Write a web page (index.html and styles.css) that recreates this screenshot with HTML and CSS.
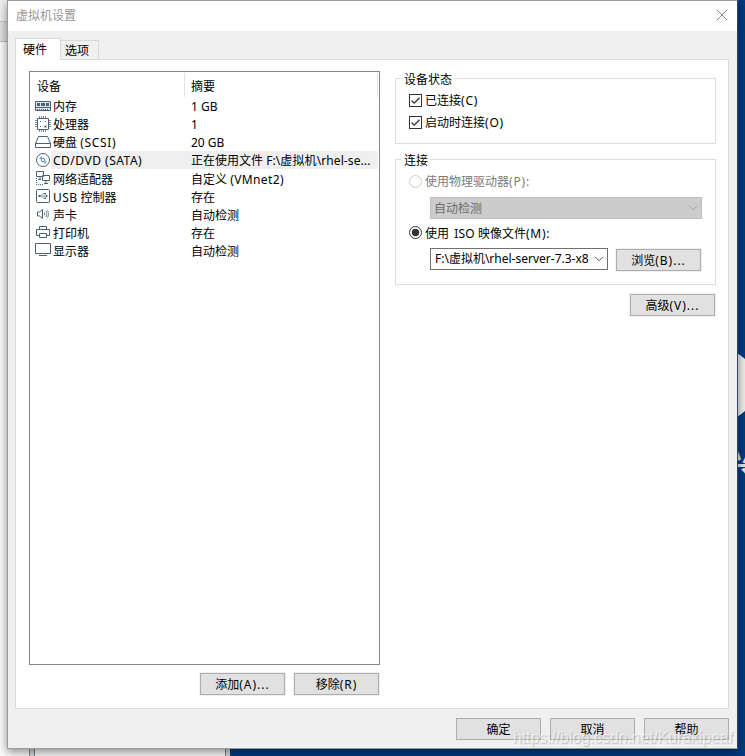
FILE: index.html
```html
<!DOCTYPE html>
<html lang="zh-CN">
<head>
<meta charset="utf-8">
<title>虚拟机设置</title>
<link rel="stylesheet" href="styles.css">
</head>
<body>
<div class="desktop">
  <div class="back-left"></div>
  <div class="back-window"></div>
  <div class="disc"></div>
  <div class="caption">兴</div>
</div>
<main class="dialog">
  <header class="titlebar">
    <h1>虚拟机设置</h1>
    <svg class="close" viewBox="0 0 12 12" width="12" height="12"><path d="M.8.8l10.4 10.4M11.2.8L.8 11.2"/></svg>
  </header>
  <nav class="tabs"><span class="tab active">硬件</span><span class="tab">选项</span></nav>
  <section class="panel">
    <div class="left">
      <div class="list">
        <div class="head"><span class="c1">设备</span><span class="c2">摘要</span></div>
        <div class="row"><svg class="ico" viewBox="0 0 16 16"><path class="light" d="M.5 3.500h15v9H.5z"/><path class="fill" d="M2 5h3v3H2zM6 5h4v3H6zM11 5h3v3h-3z"/><path d="M.5 9.500h15"/><path class="dots" d="M2 11.500h12"/></svg><span class="name">内存</span><span class="val">1 GB</span></div>
        <div class="row"><svg class="ico" viewBox="0 0 16 16"><path class="soft" d="M4.500 0v2M6.500 0v2M8.500 0v2M10.500 0v2M4.500 14v2M6.500 14v2M8.500 14v2M10.500 14v2M0 4.500h2.500M0 6.500h2.500M0 8.500h2.500M0 10.500h2.500M13.500 4.500H16M13.500 6.500H16M13.500 8.500H16M13.500 10.500H16"/><path d="M2.500 2.500h11v11h-11z"/><path class="fill" d="M5 5h1v1H5zM10 5h1v1h-1zM5 10h1v1H5zM9.500 9.500h2v2h-2z"/></svg><span class="name">处理器</span><span class="val">1</span></div>
        <div class="row"><svg class="ico" viewBox="0 0 16 16"><path d="M3.500 2.500h9l3 7H.5zM.5 9.500h15v4H.5z"/></svg><span class="name">硬盘 <i class="l w6">(SCSI)</i></span><span class="val">20 GB</span></div>
        <div class="row selected"><svg class="ico" viewBox="0 0 16 16"><circle cx="8" cy="8" r="6.500"/><circle class="blue" cx="8" cy="8" r="1.800"/><path class="pale" d="M4 6.500L6.500 4l.7 1.800-1.400 1.400zM9 10.200l1.300-1.300 1.700.8L9.700 12z"/></svg><span class="name"><i class="l w5">CD/DVD (SATA)</i></span><span class="val">正在使用文件 <i class="l w1">F:\虚拟机\rhel-se...</i></span></div>
        <div class="row"><svg class="ico" viewBox="0 0 16 16"><path d="M1.500 1.500h7v5h-7zM5 7v2M3 9.500h3M7.500 5.500h7v5h-7zM11 11v2M9 13.500h4"/><path class="dots" d="M1.500 8v6.500h7"/></svg><span class="name">网络适配器</span><span class="val">自定义 <i class="l w4">(VMnet2)</i></span></div>
        <div class="row"><svg class="ico" viewBox="0 0 16 16"><rect x="1.500" y="1.500" width="13" height="13" rx="1"/><path class="soft" d="M4 8h8M6 7.500l2-2h2M7 8.500l2 2h2"/><path class="fill" d="M3.500 7h2v2h-2zM9.500 5h1.500v1.500H9.500zM9.500 9.500H11V11H9.500zM11 6.500L13 8l-2 1.500z"/></svg><span class="name"><i class="l">USB</i> 控制器</span><span class="val">存在</span></div>
        <div class="row"><svg class="ico" viewBox="0 0 16 16"><path d="M2.500 6h2l3-2.500v9l-3-2.500h-2z"/><path class="soft" d="M9.500 6.500v3M11 5c1 1.500 1 4 0 6M12.500 4c1.200 2 1.200 6 0 8"/></svg><span class="name">声卡</span><span class="val">自动检测</span></div>
        <div class="row"><svg class="ico" viewBox="0 0 16 16"><path d="M4.500 5.500v-3h7v3M4 11.500H1.500v-6h13v6H12M4.500 9.500h7v4h-7z"/></svg><span class="name">打印机</span><span class="val">存在</span></div>
        <div class="row"><svg class="ico" viewBox="0 0 16 16"><path d="M.5 1.500h15v10H.5zM4 13.500h8"/></svg><span class="name">显示器</span><span class="val">自动检测</span></div>
      </div>
      <div class="actions"><button>添加<i class="l">(A)...</i></button><button>移除<i class="l">(R)</i></button></div>
    </div>
    <div class="right">
      <div class="group status">
        <span class="legend">设备状态</span>
        <div class="opt"><svg class="mark" viewBox="0 0 13 13"><rect x=".5" y=".5" width="12" height="12"/><path class="tick" d="M2.500 6.500l2.700 2.700 5.300-5.400"/></svg><span>已连接<i class="l">(C)</i></span></div>
        <div class="opt"><svg class="mark" viewBox="0 0 13 13"><rect x=".5" y=".5" width="12" height="12"/><path class="tick" d="M2.500 6.500l2.700 2.700 5.300-5.400"/></svg><span>启动时连接<i class="l">(O)</i></span></div>
      </div>
      <div class="group conn">
        <span class="legend">连接</span>
        <div class="opt off"><svg class="mark" viewBox="0 0 13 13"><circle cx="6.500" cy="6.500" r="6"/></svg><span>使用物理驱动器<i class="l">(P):</i></span></div>
        <div class="select disabled"><span>自动检测</span><svg viewBox="0 0 10 6"><path d="M1 .8l4 4 4-4"/></svg></div>
        <div class="opt iso"><svg class="mark" viewBox="0 0 13 13"><circle cx="6.500" cy="6.500" r="6"/><circle class="dot" cx="6.500" cy="6.500" r="3.700"/></svg><span>使用 <i class="iso-word">ISO</i> 映像文件<i class="l">(M):</i></span></div>
        <div class="pick"><div class="select"><span>F:\虚拟机\rhel-server-7.3-x8</span><svg viewBox="0 0 10 6"><path d="M1 .8l4 4 4-4"/></svg></div><button>浏览<i class="l">(B)...</i></button></div>
      </div>
      <button class="advanced">高级<i class="l">(V)...</i></button>
    </div>
  </section>
  <footer><button>确定</button><button>取消</button><button>帮助</button></footer>
</main>
<div class="watermark">https://blog.csdn.net/Kurakipeaf</div>
</body>
</html>
```
FILE: styles.css
```css
* { box-sizing: border-box; }
body {
  margin: 0;
  width: 745px;
  height: 756px;
  overflow: hidden;
  position: relative;
  background: #003981;
  color: #000;
  font: 12px/18px "Noto Sans", "Noto Sans CJK SC", sans-serif;
}
.desktop { position: absolute; inset: 0; overflow: hidden; }
.back-left {
  position: absolute; left: 0; top: 0; width: 30px; height: 756px;
  background: linear-gradient(#f0f0f0 0 21px, #c8c8c8 21px 22px, #dfdfdf 22px 41px, #bbb 41px 42px, #fbfbfb 42px);
  border-right: 1px solid #8c8c8c;
}
.back-window {
  position: absolute; left: 30px; top: 0; width: 200px; height: 756px;
  background: linear-gradient(#fafafa, #fafafa) 5px 0 / 190px 100% no-repeat #d4d8dc;
}
.back-window::before { content: ""; position: absolute; inset: 0 4px 0 4px; border: solid #78838d; border-width: 0 1px; }
.disc { position: absolute; left: 684px; top: 349px; width: 72px; height: 72px; border-radius: 50%; background: #ececec; }
.caption { position: absolute; left: 726px; top: 449px; font-size: 26px; line-height: 30px; font-weight: bold; color: #e0e4ea; }
.dialog {
  position: relative;
  width: 731px;
  height: 749px;
  margin-left: 7px;
  border: 1px solid #9b9b9b;
  border-right-color: #2d4666;
  background: #efefef;
  box-shadow: 0 3px 9px rgba(0, 0, 0, .45);
  display: flex;
  flex-direction: column;
}
.titlebar { height: 30px; flex: none; background: #fff; display: flex; justify-content: space-between; padding: 5px 9px 0 8px; }
h1 { margin: 0; font: 12px/18px "Noto Sans CJK SC", sans-serif; color: #959595; }
svg { fill: none; stroke: #4b6070; flex: none; }
.close { margin-top: 3px; stroke: #888; stroke-width: 1; }
.tabs { height: 28px; flex: none; display: flex; align-items: flex-end; padding-left: 7px; position: relative; z-index: 1; }
.tab { width: 38px; height: 19px; border: 1px solid #d9d9d9; border-width: 1px 1px 0 0; padding: 1px 0 0 4px; background: #f0f0f0; }
.tab.active { width: 46px; height: 22px; margin-bottom: -1px; padding: 2px 0 0 7px; border-left-width: 1px; background: #fff; }
.panel { width: 714px; height: 650px; flex: none; margin-left: 7px; background: #fff; border: 1px solid #d9d9d9; display: flex; padding: 11px 0 0 13px; }
.left { width: 351px; }
.list { height: 594px; border: 1px solid #828790; padding-top: 1px; }
.head { height: 24px; display: flex; line-height: 28px; margin-right: 1px; border-right: 1px solid #e2e2e2; }
.c1 { width: 155px; padding-left: 7px; border-right: 1px solid #e2e2e2; }
.c2 { padding-left: 6px; }
.row { height: 18px; display: flex; align-items: center; padding: 0 1px 0 5px; white-space: nowrap; }
.ico { width: 16px; height: 16px; }
.ico .light { fill: #dfe7ec; }
.ico .pale { fill: #7ba4c4; stroke: none; }
.ico .blue { stroke: #4f86b0; }
.ico .fill { fill: #4b6070; stroke: none; }
.ico .soft { stroke: #7c8b97; }
.ico .dots { stroke-dasharray: 1 1; }
.name { width: 133px; height: 18px; padding: 1px 0 0 2px; line-height: 17px; }
.val { flex: 1; height: 18px; padding: 1px 0 0 7px; line-height: 17px; }
.row:nth-child(n+6) .name, .row:nth-child(n+6) .val { line-height: 19px; }
.selected .name, .selected .val { background: #efefef; }
.l { font-style: normal; letter-spacing: .8px; }
.iso-word { font-style: normal; letter-spacing: .2px; margin: 0 0 0 2px; }
.name .l, .val .l { letter-spacing: .4px; }
.name .w5 { letter-spacing: .5px; }
.name .w6 { letter-spacing: .7px; }
.val .w1 { letter-spacing: .1px; }
button {
  width: 85px; height: 22px; padding: 2px 0 0;
  border: 1px solid #adadad; background: #e1e1e1; color: #000;
  font: inherit; line-height: 18px; text-align: center;
  box-shadow: 0 0 0 1px #f0f0f0;
}
button .l { letter-spacing: 1px; }
.actions { display: flex; justify-content: flex-end; gap: 9px; padding: 8px 1px 0 0; }
.right { width: 321px; margin-left: 15px; padding-top: 7px; }
.group { border: 1px solid #dcdcdc; position: relative; }
.legend { position: absolute; left: 6px; top: -8px; padding: 0 2px; background: #fff; }
.status { height: 66px; padding-top: 11px; }
.opt { display: flex; align-items: center; gap: 3px; padding-left: 13px; height: 22px; white-space: nowrap; }
.mark { width: 13px; height: 13px; margin-top: -1px; stroke: #333; }
.tick { stroke-width: 1.3; }
.off { color: #7b7b7b; }
.off .mark { stroke: #ccc; }
.mark .dot { fill: #333; stroke: none; }
.conn { height: 126px; margin-top: 15px; padding-top: 11px; }
.select { height: 22px; width: 178px; border: 1px solid #707070; background: #fff; display: flex; align-items: center; justify-content: space-between; padding: 0 3px 0 4px; white-space: nowrap; }
.select svg { width: 10px; height: 6px; stroke: #555; }
.select.disabled { width: 272px; margin: 4px 0 0 34px; padding-left: 3px; background: #ccc; border-color: #bfbfbf; color: #6d6d6d; }
.select.disabled span { padding-top: 2px; }
.disabled svg { stroke: #a0a0a0; }
.iso { margin-top: 3px; }
.iso > span { padding-top: 1px; }
.pick { display: flex; gap: 8px; margin: 4px 0 0 34px; }
.pick button { margin-top: 1px; }
.advanced { display: block; margin: 9px 0 0 235px; }
footer { display: flex; gap: 9px; justify-content: flex-end; padding: 9px 8px 0 0; }
.watermark {
  position: absolute; left: 513px; top: 728px;
  font: 15.7px/20px "Liberation Sans", sans-serif;
  color: rgba(255, 255, 255, .6); text-shadow: 1px 1px 1px rgba(100, 100, 100, .35);
  white-space: nowrap;
}
```
